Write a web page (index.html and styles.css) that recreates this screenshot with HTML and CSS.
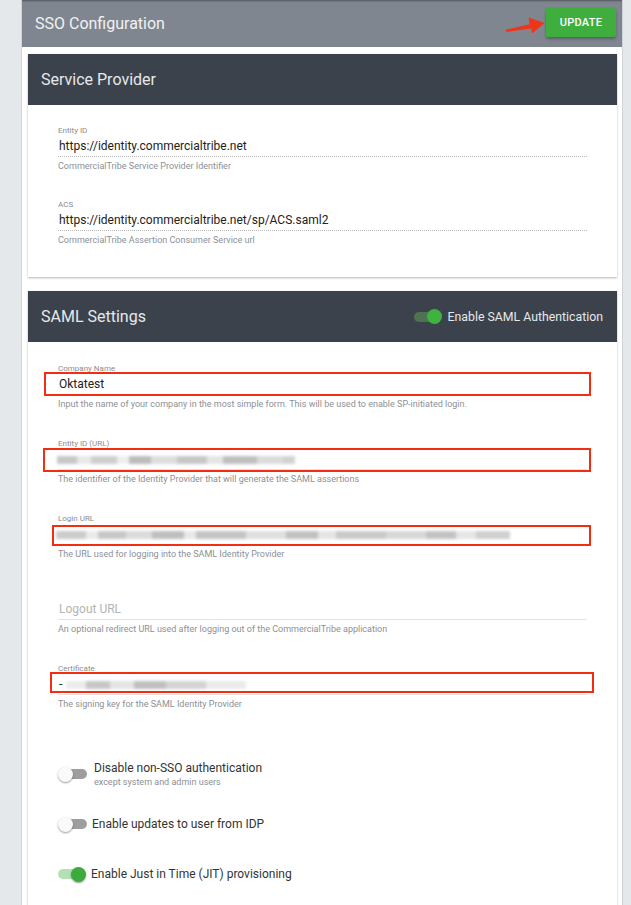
FILE: index.html
```html
<!DOCTYPE html>
<html>
<head>
    <link rel="stylesheet" href="styles.css">
</head>
<body>
    <div class="page">
        <div class="page-header">
            <h1 class="page-title">SSO Configuration</h1>
            <div class="header-actions">
                <svg class="arrow" width="42" height="22" viewBox="0 0 42 22">
                    <polygon points="1.6,15.8 25.6,10.2 24.6,3.6 40.5,9 28.2,19.4 27,14.6 2.2,18" fill="#f0341a"/>
                </svg>
                <button class="btn-update">UPDATE</button>
            </div>
        </div>

        <div class="content">
            <div class="card">
                <div class="card-header">
                    <h2 class="card-title">Service Provider</h2>
                </div>
                <div class="card-body sp-body">
                    <div class="field">
                        <div class="field-label">Entity ID</div>
                        <div class="field-value readonly">https://identity.commercialtribe.net</div>
                        <div class="field-hint">CommercialTribe Service Provider Identifier</div>
                    </div>
                    <div class="field">
                        <div class="field-label">ACS</div>
                        <div class="field-value readonly">https://identity.commercialtribe.net/sp/ACS.saml2</div>
                        <div class="field-hint">CommercialTribe Assertion Consumer Service url</div>
                    </div>
                </div>
            </div>

            <div class="card">
                <div class="card-header">
                    <h2 class="card-title">SAML Settings</h2>
                    <div class="header-toggle">
                        <span class="switch on dark"><span class="knob"></span></span>
                        <span class="header-toggle-text">Enable SAML Authentication</span>
                    </div>
                </div>
                <div class="card-body saml-body">
                    <div class="field">
                        <div class="field-label">Company Name</div>
                        <div class="field-value">Oktatest<span class="mark mark-company"></span></div>
                        <div class="field-hint">Input the name of your company in the most simple form. This will be used to enable SP-initiated login.</div>
                    </div>
                    <div class="field">
                        <div class="field-label">Entity ID (URL)</div>
                        <div class="field-value"><span class="blur blur-entity"></span><span class="mark mark-entity"></span></div>
                        <div class="field-hint">The identifier of the Identity Provider that will generate the SAML assertions</div>
                    </div>
                    <div class="field">
                        <div class="field-label">Login URL</div>
                        <div class="field-value"><span class="blur blur-login"></span><span class="mark mark-login"></span></div>
                        <div class="field-hint">The URL used for logging into the SAML Identity Provider</div>
                    </div>
                    <div class="field">
                        <div class="field-label"></div>
                        <div class="field-value placeholder">Logout URL</div>
                        <div class="field-hint">An optional redirect URL used after logging out of the CommercialTribe application</div>
                    </div>
                    <div class="field">
                        <div class="field-label">Certificate</div>
                        <div class="field-value">-<span class="blur blur-cert"></span><span class="mark mark-cert"></span></div>
                        <div class="field-hint">The signing key for the SAML Identity Provider</div>
                    </div>

                    <div class="toggles">
                        <div class="toggle-row">
                            <span class="switch"><span class="knob"></span></span>
                            <div class="toggle-text">
                                <div class="toggle-label">Disable non-SSO authentication</div>
                                <div class="toggle-sub">except system and admin users</div>
                            </div>
                        </div>
                        <div class="toggle-row">
                            <span class="switch"><span class="knob"></span></span>
                            <div class="toggle-text">
                                <div class="toggle-label">Enable updates to user from IDP</div>
                            </div>
                        </div>
                        <div class="toggle-row">
                            <span class="switch on"><span class="knob"></span></span>
                            <div class="toggle-text">
                                <div class="toggle-label">Enable Just in Time (JIT) provisioning</div>
                            </div>
                        </div>
                    </div>
                </div>
            </div>
        </div>
    </div>
</body>
</html>
```

FILE: styles.css
```css
html, body {
    margin: 0;
    height: 100%;
}
body {
    background-color: #e4e8eb;
    font-family: Roboto, "Liberation Sans", sans-serif;
    overflow: hidden;
}
.page {
    margin-left: 21px;
    width: 600px;
    min-height: 100%;
    background-color: #fff;
    border-left: 1px solid #cfd4d8;
    border-right: 1px solid #cfd4d8;
}
.page-header {
    height: 47px;
    background-color: #7f868f;
    box-shadow: inset 0 2px 2px -1px rgba(0, 0, 0, 0.35);
    display: flex;
    align-items: center;
    justify-content: space-between;
    padding: 0 6px 0 13px;
}
.page-title {
    margin: 0;
    font-size: 16px;
    font-weight: 400;
    color: #f1f2f4;
}
.header-actions {
    display: flex;
    align-items: center;
}
.arrow {
    display: block;
    margin-top: 2px;
}
.btn-update {
    width: 70px;
    height: 29px;
    margin-top: -2px;
    border: none;
    border-radius: 2px;
    background-color: #3fae3f;
    color: #fff;
    font-family: Roboto, "Liberation Sans", sans-serif;
    font-size: 11px;
    font-weight: 500;
    letter-spacing: 0.3px;
    box-shadow: 0 2px 3px rgba(0, 0, 0, 0.3);
    cursor: pointer;
}
.content {
    padding: 7px 5px 0 6px;
    display: flex;
    flex-direction: column;
    gap: 14px;
}
.card {
    background-color: #fff;
    box-shadow: 0 1px 2px rgba(0, 0, 0, 0.3);
}
.card-header {
    height: 51px;
    background-color: #3b424b;
    display: flex;
    align-items: center;
    justify-content: space-between;
    padding: 0 14px 0 13px;
}
.card-title {
    margin: 0;
    font-size: 16px;
    font-weight: 400;
    color: #e6e8eb;
}
.header-toggle {
    display: flex;
    align-items: center;
    gap: 6px;
}
.header-toggle-text {
    font-size: 12.3px;
    color: #e6e8eb;
}
.card-body {
    padding: 21px 30px 31px 30px;
}
.saml-body {
    padding-top: 22px;
    padding-bottom: 20px;
}
.field {
    margin-bottom: 28px;
}
.saml-body .field {
    margin-bottom: 29px;
}
.sp-body .field:last-child {
    margin-bottom: 0;
}
.field-label {
    height: 10px;
    font-size: 8px;
    line-height: 10px;
    color: #8c8c8c;
}
.field-value {
    position: relative;
    height: 20px;
    font-size: 12px;
    line-height: 20px;
    color: #222;
    padding-left: 1px;
    border-bottom: 1px solid #e3e3e3;
    white-space: nowrap;
}
.field-value.readonly {
    border-bottom: 1px dotted #b8b8b8;
}
.field-value.placeholder {
    color: #b4b4b4;
}
.field-hint {
    margin-top: 3px;
    font-size: 9px;
    line-height: 12px;
    color: #8d9095;
    white-space: nowrap;
}
.mark {
    position: absolute;
    top: -2px;
    bottom: -2px;
    left: -14px;
    right: -4px;
    border: 2px solid #f32d10;
}
.mark-entity {
    top: -1px;
    left: -15px;
    bottom: -3px;
}
.mark-login {
    top: 1px;
    left: -6px;
}
.mark-cert {
    left: -8px;
    right: -7px;
    bottom: 1px;
}
.blur {
    display: inline-block;
    height: 8px;
    vertical-align: middle;
    filter: blur(1.6px);
    opacity: 0.65;
}
.blur-entity {
    width: 238px;
    margin-left: -2px;
    background: linear-gradient(90deg, #aaa 0 20px, #ddd 20px 34px, #b5b5b5 34px 60px, #e6e6e6 60px 72px, #999 72px 94px, #ccc 94px 120px, #a9a9a9 120px 150px, #d8d8d8 150px 166px, #9e9e9e 166px 200px, #c9c9c9 200px 226px, #bbb 226px 238px);
}
.blur-login {
    width: 454px;
    margin-left: -3px;
    background: linear-gradient(90deg, #b0b0b0 0 30px, #e0e0e0 30px 42px, #aaa 42px 70px, #c8c8c8 70px 96px, #9d9d9d 96px 128px, #ddd 128px 140px, #a5a5a5 140px 190px, #cfcfcf 190px 230px, #a0a0a0 230px 262px, #d6d6d6 262px 280px, #adadad 280px 330px, #c3c3c3 330px 370px, #a3a3a3 370px 400px, #d9d9d9 400px 420px, #b7b7b7 420px 454px);
}
.blur-cert {
    width: 180px;
    margin-left: 4px;
    background: linear-gradient(90deg, #e2e2e2 0 20px, #a9a9a9 20px 44px, #d6d6d6 44px 68px, #9e9e9e 68px 100px, #bdbdbd 100px 140px, #e0e0e0 140px 180px);
}
.toggles {
    padding-top: 21px;
    display: flex;
    flex-direction: column;
    gap: 22px;
}
.toggle-row {
    display: flex;
    align-items: center;
    gap: 7px;
    min-height: 28px;
}
.toggle-row:nth-child(n+2) .toggle-text {
    margin-left: -2px;
}
.switch {
    display: flex;
    align-items: center;
    width: 24px;
    height: 10px;
    margin-left: 5px;
    border-radius: 5px;
    background-color: #9e9e9e;
    flex-shrink: 0;
}
.switch .knob {
    width: 15px;
    height: 15px;
    margin-left: -5px;
    border-radius: 50%;
    background-color: #fafafa;
    box-shadow: 0 1px 2px rgba(0, 0, 0, 0.4);
}
.switch.on {
    justify-content: flex-end;
    margin-left: 0;
    margin-right: 4px;
    background-color: #b3e1b3;
}
.switch.on .knob {
    margin-left: 0;
    margin-right: -4px;
    background-color: #3daa3d;
}
.switch.on.dark {
    background-color: #4e7353;
    width: 23px;
    margin-right: 5px;
}
.switch.on.dark .knob {
    background-color: #3eb33e;
    box-shadow: none;
    margin-right: -5px;
}
.toggle-label {
    font-size: 12px;
    line-height: 16px;
    color: #333;
}
.toggle-sub {
    font-size: 9px;
    line-height: 12px;
    color: #8d9095;
}
```
